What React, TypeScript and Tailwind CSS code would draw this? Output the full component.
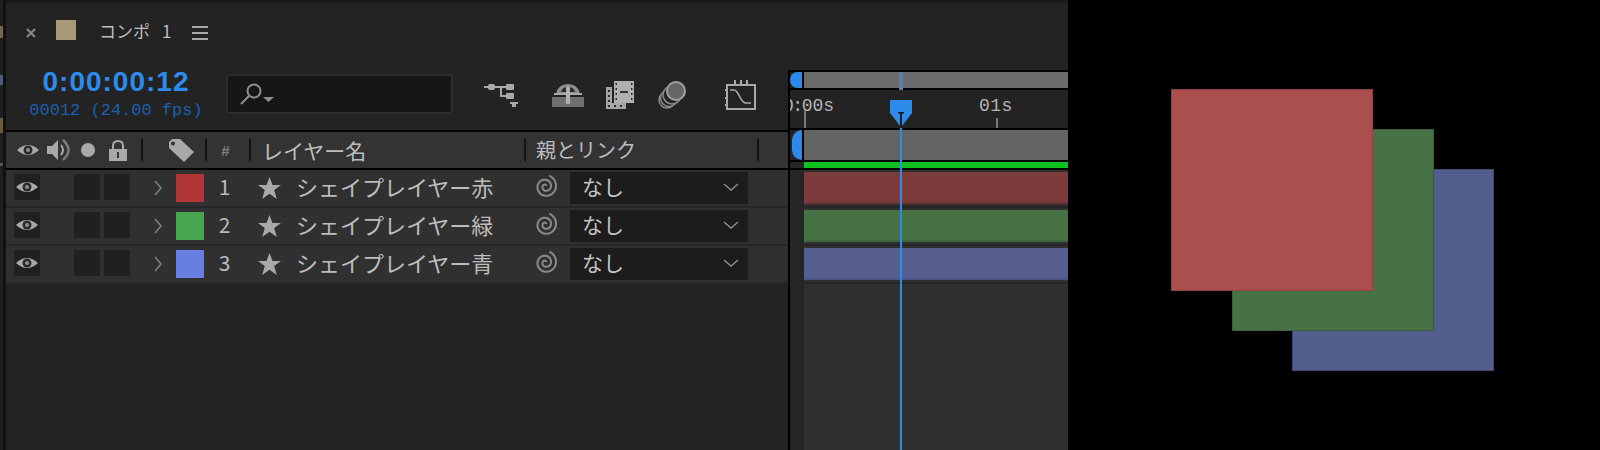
const GRAY = '#a9a9a9';

const layers = [
  { id: 1, name: 'シェイプレイヤー赤', label: 'bg-[#b23636]', bar: 'bg-[#7b3b3b]', edge: 'bg-[#6e3434]' },
  { id: 2, name: 'シェイプレイヤー緑', label: 'bg-[#48a64e]', bar: 'bg-[#467246]', edge: 'bg-[#3e663f]' },
  { id: 3, name: 'シェイプレイヤー青', label: 'bg-[#667fe0]', bar: 'bg-[#555e8f]', edge: 'bg-[#4a5488]' },
];

const spiral = Array.from({ length: 70 }, (_, i) => {
  const t = i / 69;
  const a = -0.6 - t * Math.PI * 4.2;
  const r = 1 + t * 10.5;
  return `${(12.5 + Math.cos(a) * r).toFixed(2)},${(12.5 + Math.sin(a) * r).toFixed(2)}`;
}).join(' ');

function Eye() {
  return (
    <svg width="22" height="14" viewBox="0 0 22 14" className="shrink-0">
      <path d="M0 7Q11 -3 22 7Q11 17 0 7Z" fill={GRAY} />
      <circle cx="11" cy="7" r="4.5" fill="#2b2b2b" />
      <circle cx="11" cy="7" r="2" fill="#8d8d8d" />
    </svg>
  );
}

function Speaker() {
  return (
    <svg width="24" height="22" viewBox="0 0 24 22" className="ml-[8px] shrink-0">
      <path d="M0 7H5L11 1V21L5 15H0Z" fill={GRAY} />
      <path d="M14 6Q18 11 14 16" fill="none" stroke={GRAY} strokeWidth="2" />
      <path d="M16 1Q27 11 16 21" fill="none" stroke="#7c7c7c" strokeWidth="2.5" />
    </svg>
  );
}

function Lock() {
  return (
    <svg width="18" height="21" viewBox="0 0 18 21" className="ml-[14px] shrink-0">
      <path d="M4 9V6Q4 1 9 1Q14 1 14 6V9" fill="none" stroke={GRAY} strokeWidth="2" />
      <rect y="9" width="18" height="12" fill={GRAY} />
      <rect x="8" y="12" width="2" height="6" fill="#333" />
    </svg>
  );
}

function Tag() {
  return (
    <svg width="25" height="23" viewBox="0 0 25 23" className="ml-[26px] shrink-0">
      <path fillRule="evenodd" d="M3 0H11L25 13L15 23L0 9V3ZM6 4.5A2 2 0 1 0 6 4.51Z" fill={GRAY} />
    </svg>
  );
}

function Sep({ className }: { className: string }) {
  return <div className={`h-[22px] w-[2px] shrink-0 bg-[#141414] ${className}`} />;
}

function FlowIcon() {
  return (
    <svg width="34" height="24" viewBox="0 0 34 24" className="ml-[31px] shrink-0">
      <rect y="3" width="26" height="2" fill={GRAY} />
      <rect x="4" y="1" width="7" height="6" rx="2" fill={GRAY} />
      <rect x="22" y="1" width="8" height="6" rx="1" fill={GRAY} />
      <rect x="16" y="3" width="2" height="11" fill={GRAY} />
      <rect x="16" y="12" width="8" height="2" fill={GRAY} />
      <rect x="22" y="10" width="8" height="6" rx="1" fill={GRAY} />
      <path d="M26 19H34V21H32V24H28V21H26Z" fill={GRAY} />
    </svg>
  );
}

function ParasolIcon() {
  return (
    <svg width="32" height="24" viewBox="0 0 32 24" className="ml-[34px] shrink-0">
      <rect y="14" width="32" height="10" fill="#707070" />
      <path d="M4 11Q6 1 16 1Q26 1 28 11Z" fill="#8e8e8e" />
      <rect x="2" y="10" width="28" height="2" fill={GRAY} />
      <path d="M9 9Q10 4 16 4Q22 4 23 9Z" fill="#2c2c2c" />
      <rect x="14" y="4" width="4" height="17" fill="#b0b0b0" />
    </svg>
  );
}

function FilmIcon() {
  return (
    <svg width="28" height="28" viewBox="0 0 28 28" className="ml-[22px] shrink-0">
      <path d="M0 6H6V22H20V28H0Z" fill="#a5a5a5" />
      <path d="M2 9H4V11H2ZM2 14H4V16H2ZM2 19H4V21H2ZM2 24H4V26H2ZM8 24H10V26H8ZM14 24H16V26H14Z" fill="#2a2a2a" />
      <rect x="8" width="20" height="22" fill="#b0b0b0" />
      <path d="M9.500 2H11V4H9.500ZM9.500 7H11V9H9.500ZM9.500 12H11V14H9.500ZM9.500 17H11V19H9.500ZM25 2H26.500V4H25ZM25 7H26.500V9H25ZM25 12H26.500V14H25ZM25 17H26.500V19H25Z" fill="#2a2a2a" />
      <rect x="14" y="10" width="8" height="2" fill="#333" />
    </svg>
  );
}

function CirclesIcon() {
  return (
    <svg width="28" height="28" viewBox="0 0 28 28" className="ml-[24px] shrink-0">
      <circle cx="9" cy="19" r="8" fill="#232323" stroke="#8a8a8a" strokeWidth="1.5" />
      <circle cx="11" cy="17" r="8.500" fill="#232323" stroke="#8a8a8a" strokeWidth="1.5" />
      <circle cx="14" cy="14" r="9" fill="#232323" stroke="#8a8a8a" strokeWidth="1.5" />
      <circle cx="18" cy="10" r="9" fill="#666666" stroke="#a0a0a0" strokeWidth="2" />
    </svg>
  );
}

function GraphIcon() {
  return (
    <svg width="31" height="30" viewBox="0 0 31 30" className="ml-[39px] shrink-0">
      <rect x="2" y="5" width="28" height="24" fill="none" stroke={GRAY} strokeWidth="2" />
      <path d="M10 0V5M16 0V5M22 0V5M0 10H2M0 18H2M0 25H2" stroke={GRAY} strokeWidth="2" />
      <path d="M5 10H9C14 10 15 23 21 23H26" fill="none" stroke={GRAY} strokeWidth="1.500" />
    </svg>
  );
}

function LayerRow({ layer }: { layer: (typeof layers)[number] }) {
  return (
    <div className="flex h-[36px] items-center bg-[#303030]">
      <div className="ml-[8px] mb-[2px] flex h-[26px] w-[26px] shrink-0 items-center justify-center bg-[#202020]">
        <Eye />
      </div>
      <div className="ml-[34px] mb-[2px] h-[26px] w-[26px] shrink-0 bg-[#202020]" />
      <div className="ml-[4px] mb-[2px] h-[26px] w-[26px] shrink-0 bg-[#202020]" />
      <svg width="8" height="16" viewBox="0 0 8 16" className="ml-[24px] shrink-0">
        <path d="M1 1L7 8L1 15" fill="none" stroke="#808080" strokeWidth="1.500" />
      </svg>
      <div className={`ml-[14px] h-[28px] w-[28px] shrink-0 ${layer.label}`} />
      <div className="mb-[4px] w-[41px] shrink-0 text-center font-['Noto_Sans_CJK_JP',sans-serif] text-[21px] leading-none text-[#bbbbbb]">
        {layer.id}
      </div>
      <svg width="23" height="22" viewBox="0 0 23 22" className="ml-[13px] shrink-0">
        <path d="M11.500 0L14.500 8H23L16.200 13L18.800 22L11.500 16.700L4.200 22L6.800 13L0 8H8.500Z" fill={GRAY} />
      </svg>
      <div className="mb-[4px] ml-[15px] w-[237px] shrink-0 whitespace-nowrap font-['Noto_Sans_CJK_JP',sans-serif] text-[22px] leading-none text-[#bdbdbd]">
        {layer.name}
      </div>
      <svg width="25" height="25" viewBox="0 0 25 25" className="mb-[4px] shrink-0">
        <polyline points={spiral} fill="none" stroke="#8a8a8a" strokeWidth="2" />
      </svg>
      <div className="ml-[12px] flex h-[32px] w-[178px] shrink-0 items-center justify-between bg-[#1c1c1c] pl-[12px] pr-[9px]">
        <span className="mb-[4px] font-['Noto_Sans_CJK_JP',sans-serif] text-[21px] leading-none text-[#c4c4c4]">なし</span>
        <svg width="16" height="8" viewBox="0 0 16 8" className="mb-[2px]">
          <path d="M1 1L8 7L15 1" fill="none" stroke="#8d8d8d" strokeWidth="1.500" />
        </svg>
      </div>
    </div>
  );
}

function TimelineRow({ layer }: { layer: (typeof layers)[number] }) {
  return (
    <div className="flex h-[36px]">
      <div className="w-[14px] shrink-0 bg-[#252525]" />
      <div className="flex-1 bg-[#303030] pt-[2px]">
        <div className={`flex h-[32px] flex-col justify-end ${layer.bar}`}>
          <div className={`ml-[2px] h-[2px] ${layer.edge}`} />
        </div>
      </div>
    </div>
  );
}

export default function App() {
  return (
    <div className="flex h-[450px] w-[1600px] overflow-hidden bg-black">
      <div className="flex w-[3px] shrink-0 flex-col bg-[#1f1f1f]">
        <div className="mt-[26px] h-[12px] bg-[#75684f]" />
        <div className="mt-[37px] h-[10px] bg-[#4a6078]" />
        <div className="mt-[33px] h-[15px] bg-[#6e5a3c]" />
        <div className="mt-[30px] h-[3px] bg-[#555555]" />
      </div>
      <div className="w-[3px] shrink-0 bg-[#111111]" />

      <div className="flex w-[1062px] shrink-0 flex-col">
        <div className="h-[3px] shrink-0 bg-[#1a1a1a]" />
        <div className="flex min-h-0 flex-1">
          <div className="flex w-[782px] shrink-0 flex-col bg-[#232323]">
            <div className="flex h-[57px] shrink-0 items-start pt-[17px]">
              <svg width="10" height="10" viewBox="0 0 10 10" className="ml-[20px] mt-[8px] shrink-0">
                <path d="M1 1L9 9M9 1L1 9" stroke="#8a8a8a" strokeWidth="2" />
              </svg>
              <div className="ml-[20px] h-[20px] w-[20px] shrink-0 bg-[#a89878]" />
              <div className="ml-[23px] w-[93px] shrink-0 whitespace-nowrap font-['Noto_Sans_CJK_JP',sans-serif] text-[17px] leading-[22px] text-[#bdbdbd]">
                コンポ<span className="ml-[12px]">1</span>
              </div>
              <div className="mt-[6px] flex h-[14px] w-[16px] shrink-0 flex-col justify-between">
                <div className="h-[2px] bg-[#a9a9a9]" />
                <div className="h-[2px] bg-[#a9a9a9]" />
                <div className="h-[2px] bg-[#a9a9a9]" />
              </div>
            </div>

            <div className="flex h-[70px] shrink-0 items-center">
              <div className="ml-[23px] flex w-[174px] shrink-0 flex-col items-center">
                <div className="font-['Liberation_Sans',sans-serif] text-[28px] leading-[28px] font-bold tracking-[1px] text-[#2d8ceb]">
                  0:00:00:12
                </div>
                <div className="mt-[4px] whitespace-nowrap font-['Liberation_Mono',monospace] text-[17px] leading-[22px] text-[#1a5fb0]">
                  00012 (24.00 fps)
                </div>
              </div>
              <div className="ml-[23px] mb-[2px] flex h-[40px] w-[227px] shrink-0 items-center rounded-[3px] border-2 border-[#2c2c2c] bg-[#161616] pl-[12px]">
                <svg width="34" height="22" viewBox="0 0 34 22">
                  <circle cx="14" cy="8" r="6.500" fill="none" stroke="#8f8f8f" strokeWidth="2" />
                  <path d="M9 13L1 21" stroke="#8f8f8f" strokeWidth="2" />
                  <path d="M23 14H34L28.500 19Z" fill="#8f8f8f" />
                </svg>
              </div>
              <FlowIcon />
              <ParasolIcon />
              <FilmIcon />
              <CirclesIcon />
              <GraphIcon />
            </div>

            <div className="h-[2px] shrink-0 bg-black" />
            <div className="flex h-[36px] shrink-0 items-center bg-[#333333]">
              <div className="ml-[11px] flex shrink-0">
                <Eye />
              </div>
              <Speaker />
              <div className="ml-[10px] h-[14px] w-[14px] shrink-0 rounded-full bg-[#a9a9a9]" />
              <Lock />
              <Sep className="ml-[14px]" />
              <Tag />
              <Sep className="ml-[11px]" />
              <div className="ml-[12px] w-[13px] shrink-0 text-center font-['Liberation_Sans',sans-serif] text-[15px] leading-none font-bold text-[#76808c]">
                #
              </div>
              <Sep className="ml-[17px]" />
              <div className="ml-[11px] w-[262px] shrink-0 whitespace-nowrap font-['Noto_Sans_CJK_JP',sans-serif] text-[21px] leading-none text-[#bdbdbd]">
                レイヤー名
              </div>
              <Sep className="" />
              <div className="ml-[10px] w-[221px] shrink-0 whitespace-nowrap font-['Noto_Sans_CJK_JP',sans-serif] text-[20px] leading-none text-[#bdbdbd]">
                親とリンク
              </div>
              <Sep className="" />
            </div>
            <div className="h-[2px] shrink-0 bg-black" />

            <div className="flex shrink-0 flex-col gap-[2px] bg-[#262626] pb-[2px]">
              {layers.map(layer => (
                <LayerRow key={layer.id} layer={layer} />
              ))}
            </div>
          </div>

          <div className="flex w-[2px] shrink-0 flex-col">
            <div className="h-[67px] bg-[#232323]" />
            <div className="flex-1 bg-black" />
          </div>

          <div className="relative flex w-[278px] shrink-0 flex-col bg-[#232323]">
            <div className="h-[67px] shrink-0" />

            <div className="flex h-[20px] shrink-0 bg-black py-[2px]">
              <div className="w-[12px] shrink-0 bg-[#232323]">
                <div className="h-full w-full rounded-l-full bg-[#2d8ceb]" />
              </div>
              <div className="relative ml-[2px] flex-1 bg-[#6b6b6b]">
                <div className="absolute left-[95px] top-0 h-[18px] w-[4px] bg-[#5d7ea3]" />
              </div>
            </div>

            <div className="relative h-[38px] shrink-0 overflow-hidden font-['Liberation_Mono',monospace] text-[18px] leading-none text-[#b5b5b5]">
              <span className="absolute left-[-7px] top-[7px]">
                0<span className="-mx-[1.5px]">:</span>00s
              </span>
              <span className="absolute left-[189px] top-[7px] tracking-[0.5px]">01s</span>
              <div className="absolute bottom-0 left-[14px] h-[18px] w-[2px] bg-[#777777]" />
              <div className="absolute bottom-0 left-[206px] h-[10px] w-[2px] bg-[#777777]" />
            </div>

            <div className="flex h-[34px] shrink-0 flex-col bg-black py-[2px]">
              <div className="flex h-[30px]">
                <div className="w-[12px] shrink-0 bg-[#232323] pl-[2px]">
                  <div className="h-full w-full rounded-l-full bg-[#2d8ceb]" />
                </div>
                <div className="ml-[2px] flex-1 bg-[#646464]" />
              </div>
            </div>

            <div className="flex h-[8px] shrink-0 bg-black pb-[2px]">
              <div className="w-[14px] shrink-0 bg-[#252525]" />
              <div className="flex-1 bg-[#10c020]" />
            </div>

            <div className="flex shrink-0 flex-col gap-[2px] bg-[#262626] pb-[2px]">
              {layers.map(layer => (
                <TimelineRow key={layer.id} layer={layer} />
              ))}
            </div>

            <div className="flex min-h-0 flex-1">
              <div className="w-[14px] shrink-0 bg-[#252525]" />
              <div className="flex-1 bg-[#303030]" />
            </div>

            <div className="absolute bottom-0 left-[110px] top-[125px] w-[2px] bg-[#2d8ceb]" />
            <svg width="22" height="26" viewBox="0 0 22 26" className="absolute left-[100px] top-[97px]">
              <path d="M0 0H22V13L12 26H10L0 13Z" fill="#2d8ceb" />
              <path d="M8 12H14V13.500H12V26H10V13.500H8Z" fill="#1a1a1a" />
            </svg>
          </div>
        </div>
      </div>

      <div className="relative flex-1 bg-black">
        <div className="absolute left-[224px] top-[169px] h-[202px] w-[202px] border border-[#3f4872] bg-[#535d8e]" />
        <div className="absolute left-[164px] top-[129px] h-[202px] w-[202px] border border-[#3c5c3e] bg-[#467246]" />
        <div className="absolute left-[103px] top-[89px] h-[202px] w-[202px] border border-[#8f4346] bg-[#a94f4d]" />
      </div>
    </div>
  );
}
